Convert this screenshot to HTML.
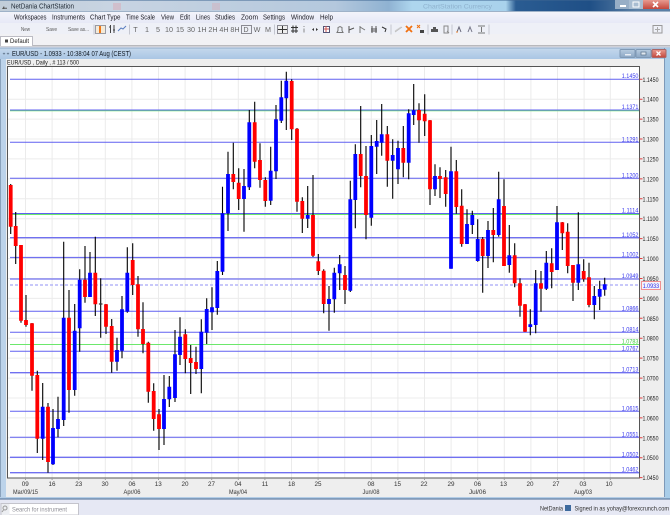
<!DOCTYPE html>
<html><head><meta charset="utf-8"><style>
html,body{margin:0;padding:0;width:670px;height:515px;overflow:hidden;background:#e6e8f4}
svg{display:block;font-family:"Liberation Sans",sans-serif;filter:blur(.3px)}
</style></head><body>
<svg width="670" height="515" viewBox="0 0 670 515" xmlns="http://www.w3.org/2000/svg">
<defs>
<linearGradient id="tb" x1="0" x2="1" y1="0" y2="0">
<stop offset="0" stop-color="#c2ced9"/><stop offset=".17" stop-color="#c8d4e2"/><stop offset=".5" stop-color="#b4c8dd"/><stop offset=".58" stop-color="#8fb2d2"/><stop offset=".615" stop-color="#aed6ee"/><stop offset=".755" stop-color="#a9d2ec"/><stop offset=".77" stop-color="#2a5c92"/><stop offset=".88" stop-color="#1f4f86"/><stop offset=".95" stop-color="#5a7fa5"/><stop offset="1" stop-color="#5a7fa5"/>
</linearGradient>
<linearGradient id="ct" x1="0" x2="0" y1="0" y2="1"><stop offset="0" stop-color="#c5d8ec"/><stop offset="1" stop-color="#aac6e4"/></linearGradient>
<linearGradient id="mn" x1="0" x2="0" y1="0" y2="1"><stop offset="0" stop-color="#f4f5fb"/><stop offset="1" stop-color="#e6e8f6"/></linearGradient>
<linearGradient id="cb" x1="0" x2="0" y1="0" y2="1"><stop offset="0" stop-color="#e89a90"/><stop offset="1" stop-color="#c4473c"/></linearGradient>
<linearGradient id="gb" x1="0" x2="0" y1="0" y2="1"><stop offset="0" stop-color="#b8cce0"/><stop offset="1" stop-color="#8aa6c4"/></linearGradient>
</defs>

<!-- window chrome -->
<rect width="670" height="515" fill="#e6e8f4"/>
<rect width="670" height="12" fill="url(#tb)"/>
<rect y="0" width="670" height="1" fill="#3d6692" opacity=".5"/>
<rect x="113" y="3" width="8" height="7" fill="#d9a9b5" opacity=".5"/>
<rect x="212" y="3" width="8" height="7" fill="#d9a9b5" opacity=".4"/>
<rect x="615" y="0" width="55" height="9" fill="#a9bdd1"/>
<rect x="615" y="0" width="14" height="9" fill="#97aec6"/>
<rect x="643" y="0" width="26" height="9" fill="url(#cb)"/>
<rect x="620" y="5" width="6" height="2" fill="#fff"/>
<rect x="633" y="2" width="6" height="5" fill="none" stroke="#fff" stroke-width="1"/>
<path d="M653 2l5 5M658 2l-5 5" stroke="#fff" stroke-width="1.6"/>
<path d="M2 9l2-3 1 3zM5 9l1-2 1 2z" fill="#555"/>
<text x="11" y="8.5" font-size="7.6" fill="#1e2833" textLength="63" lengthAdjust="spacingAndGlyphs">NetDania ChartStation</text>
<text x="423" y="8.5" font-size="6" fill="#8fb2ce" textLength="69" lengthAdjust="spacingAndGlyphs">ChartStation Currency</text>
<rect y="11" width="670" height="12" fill="url(#mn)"/>
<rect y="11" width="670" height="1" fill="#9fb2c8"/>
<rect y="23" width="670" height="12" fill="#eef0f7"/>
<rect y="34" width="670" height="12" fill="#f1f1f4"/>

<g font-size="7.2" fill="#1c1c24">
<text x="14" y="19.4" textLength="32.5" lengthAdjust="spacingAndGlyphs">Workspaces</text>
<text x="52" y="19.4" textLength="33" lengthAdjust="spacingAndGlyphs">Instruments</text>
<text x="90" y="19.4" textLength="30.5" lengthAdjust="spacingAndGlyphs">Chart Type</text>
<text x="126" y="19.4" textLength="29" lengthAdjust="spacingAndGlyphs">Time Scale</text>
<text x="161" y="19.4" textLength="13" lengthAdjust="spacingAndGlyphs">View</text>
<text x="180" y="19.4" textLength="10" lengthAdjust="spacingAndGlyphs">Edit</text>
<text x="196" y="19.4" textLength="14" lengthAdjust="spacingAndGlyphs">Lines</text>
<text x="215" y="19.4" textLength="20" lengthAdjust="spacingAndGlyphs">Studies</text>
<text x="241" y="19.4" textLength="17" lengthAdjust="spacingAndGlyphs">Zoom</text>
<text x="263" y="19.4" textLength="22" lengthAdjust="spacingAndGlyphs">Settings</text>
<text x="291" y="19.4" textLength="23" lengthAdjust="spacingAndGlyphs">Window</text>
<text x="320" y="19.4" textLength="13" lengthAdjust="spacingAndGlyphs">Help</text>
</g>

<!-- toolbar -->
<g font-size="5.6" fill="#555">
<text x="21" y="31" textLength="9" lengthAdjust="spacingAndGlyphs">New</text>
<text x="46" y="31" textLength="11" lengthAdjust="spacingAndGlyphs">Save</text>
<text x="68" y="31" textLength="21" lengthAdjust="spacingAndGlyphs">Save as...</text>
</g>
<rect x="95.5" y="25.5" width="10" height="8" fill="#f4ead8" stroke="#9a9aa2"/>
<path d="M100 26v7" stroke="#f07818" stroke-width="2"/>
<path d="M110.500 25v8M114 25v8M109 27h2M113 30h2" stroke="#444" fill="none"/>
<path d="M118 31l3-3 2 1 3-3" stroke="#5a7fc0" fill="none" stroke-width="1"/>
<path d="M94 24.500v10M129.500 24.500v10M274.500 24.500v10M391 24.500v10M428 24.500v10M452 24.500v10M489 24.500v10" stroke="#c4c6cf"/>
<g font-size="7.200" fill="#666" text-anchor="middle">
<text x="135.500" y="32">T</text><text x="147" y="32">1</text><text x="158" y="32">5</text><text x="169" y="32">10</text><text x="180" y="32">15</text><text x="191" y="32">30</text><text x="202" y="32">1H</text><text x="213" y="32">2H</text><text x="224" y="32">4H</text><text x="235" y="32">8H</text><text x="246" y="32">D</text><text x="257" y="32">W</text><text x="268" y="32">M</text>
</g>
<rect x="241.500" y="25.500" width="10" height="8" fill="none" stroke="#8a8a92"/>
<rect x="277.500" y="25.500" width="10" height="8" fill="#eee" stroke="#8a8a92"/>
<path d="M282.500 26v7M278 29.500h9" stroke="#333"/>
<path d="M291 27.500h7M291 31h7M293 25.500v7.500M296 25.500v7.500" stroke="#333" fill="none"/>
<path d="M304 26v1M304 28.500v4" stroke="#888"/>
<path d="M312 29.500l2-1.500v3zM318 29.500l-2-1.500v3z" fill="#333"/>
<rect x="323.500" y="26.500" width="6" height="6" fill="#fff" stroke="#557"/><path d="M324 29h5M326 26v6" stroke="#c55"/>
<g stroke="#777" fill="none">
<path d="M340 32.500h-3l1-2v-3l2-1 2 1v3l1 2z"/>
<path d="M349 26v7M349 30l5-2" stroke="#555"/>
<path d="M360 26v7M360 27l5 3" stroke="#777"/>
<path d="M372 26v7M376 26v7M371 29h6M371 31h6" stroke="#555"/>
<path d="M382 27l4 2-1 3" stroke="#333"/>
<path d="M395 32l7-5" stroke="#bbb"/>
<path d="M395 31l6-4" stroke="#ccc"/>
</g>
<path d="M406 26l6 6M412 26l-6 6" stroke="#f07010" stroke-width="1.800"/>
<path d="M417 25l3 3M420 25l-3 3" stroke="#f07010"/><rect x="420" y="30" width="4" height="3" fill="#444"/>
<path d="M431 32v-3h7v3zM433 29v-2h3v2z" fill="#555"/>
<path d="M444 26h4v7h-4zM447 31l2 2" fill="none" stroke="#888"/>
<g fill="none" stroke="#666">
<path d="M457 32l2-5 2 5" stroke="#667"/><circle cx="457" cy="32" r=".8" fill="#f08020" stroke="none"/>
<path d="M468 32l2-5 2 5" stroke="#778"/>
<path d="M478 26h7M478 33h7M481.500 27v5" stroke="#777"/>
<rect x="649" y="25.500" width="9" height="7.500" stroke="#999" transform="translate(4 0)"/>
<path d="M657.500 27v5M655 29.500h5" stroke="#aaa"/>
</g>

<!-- tab -->
<rect y="45" width="670" height="1.500" fill="#b8b8bc"/>
<rect y="46.500" width="670" height="1.500" fill="#e8eaf2"/>
<path d="M.5 46V36.500h32V46" fill="#fff" stroke="#bcbcc4"/>
<rect x="5" y="39.500" width="3" height="3" fill="#444"/>
<text x="10" y="43" font-size="6.500" fill="#222" textLength="19" lengthAdjust="spacingAndGlyphs">Default</text>

<!-- child window -->
<rect y="48" width="666" height="451" fill="#eeeeee"/>
<rect y="48" width="670" height="11" fill="url(#ct)"/>
<rect y="47.500" width="670" height="1" fill="#8fabc9"/>
<rect x="0" y="59" width="6" height="440" fill="#bcd3ea"/>
<rect x="0" y="59" width="1" height="440" fill="#8aa2bc"/>
<rect x="664" y="48" width="6" height="451" fill="#a9cde9"/>
<rect x="664" y="48" width="1" height="451" fill="#7e99b8"/>
<rect y="497" width="666" height="1.500" fill="#b4cde6"/>
<rect y="498.500" width="670" height="1" fill="#4a6a92"/>
<path d="M3 53l1 1 1-1M7 53l1 1 1-1" stroke="#6a7f96" fill="none"/>
<text x="12" y="56.200" font-size="7" fill="#111a24" textLength="119" lengthAdjust="spacingAndGlyphs">EUR/USD - 1.0933 - 10:38:04  07 Aug (CEST)</text>
<rect x="620" y="49.500" width="15" height="8" rx="1" fill="url(#gb)" stroke="#7f99b5"/>
<rect x="636" y="49.500" width="15" height="8" rx="1" fill="url(#gb)" stroke="#7f99b5"/>
<rect x="652" y="49.500" width="14" height="8" rx="1" fill="url(#cb)" stroke="#a66"/>
<rect x="625" y="54" width="6" height="1.500" fill="#e8eef5"/>
<path d="M641 52h5v3h-5z" fill="#dfe7ef" stroke="#5f7890" stroke-width=".8"/>
<path d="M656.500 51.500l4 4M660.500 51.500l-4 4" stroke="#fff" stroke-width="1.300"/>
<text x="7" y="64.300" font-size="6" fill="#222" textLength="72" lengthAdjust="spacingAndGlyphs">EUR/USD , Daily , # 113 / 500</text>

<!-- plot area -->
<rect x="7.500" y="66.500" width="632" height="411.500" fill="#fff"/>
<path stroke="#ececec" fill="none" d="M7.500 99.200H639M7.500 119.100H639M7.500 139H639M7.500 158.900H639M7.500 178.900H639M7.500 198.800H639M7.500 218.700H639M7.500 238.600H639M7.500 258.500H639M7.500 278.500H639M7.500 298.400H639M7.500 318.300H639M7.500 338.200H639M7.500 358.100H639M7.500 378.100H639M7.500 398H639M7.500 417.900H639M7.500 437.800H639M7.500 457.700H639"/>
<path stroke="#ebebeb" fill="none" d="M25.500 67V478M52.100 67V478M78.700 67V478M105.300 67V478M131.900 67V478M158.500 67V478M185.100 67V478M211.700 67V478M238.300 67V478M264.900 67V478M291.500 67V478M318.100 67V478M344.700 67V478M371.300 67V478M397.900 67V478M424.500 67V478M451.100 67V478M477.700 67V478M504.300 67V478M530.900 67V478M557.500 67V478M584.100 67V478M610.300 67V478"/>

<!-- green lines -->
<path stroke="#6ce86c" fill="none" d="M10 110.800H639M10 214.500H639M10 344.500H639"/>
<!-- blue lines -->
<path stroke="#6060f0" fill="none" d="M10 79.300H639M10 110H639M10 142.300H639M10 178.300H639M10 213.500H639M10 311.300H639M10 332.300H639M10 351.300H639M10 411.300H639M10 437.300H639"/>
<path stroke="#7070f0" fill="none" stroke-width="1.300" d="M10 237.700H639M10 257.500H639M10 279H639M10 372.700H639M10 457.300H639M10 472.700H639"/>
<path stroke="#a8a8f8" fill="none" stroke-width="1.300" stroke-dasharray="3 2" d="M10 285H639"/>

<!-- wicks -->
<path fill="none" stroke="#000" stroke-width="1.100" d="M10.700 184V234M15.700 212V264M21 245V322.700M26 295V326.700M32 323V390.700M37.300 370.700V453M42.700 383V460M48 403V472.700M53 409V465M58 396.700V437.300M63.700 241.700V426M69 290V412.700M74.700 304V395.700M79.700 269.300V351.700M85 246V302.700M90 252V297M95.300 236.700V316M100.700 278.300V337.700M106 304V334M111.700 319V372.700M117 337.700V370.700M122 296V358.300M127.300 247.300V312.700M132.700 243.300V295M138 276V336.700M143 302.300V353.300M148.300 341.700V402.700M153.700 383.300V430.700M159 409V450M164 375V445M169.300 376V407M175 330V402M180 317.300V365M185.300 329.300V373.300M190.700 345V394M196 346.700V374M201.300 319.300V393.300M206.700 298.300V344M212 287.300V330M217.300 261V314.700M222.500 186.700V275M228 151.700V231M233.300 142.700V189.300M238.700 168.300V210M244 169V231.700M249.300 110V190M254.700 101.700V168.300M260 143.300V187.700M265.300 177.300V206.700M270.700 146.700V205M276 105V179M281.300 80.700V123M286.300 71.700V130M291.700 79.300V140M297 128V211.700M302.300 197.300V233M307.700 186V228M313 175V257M318.300 254V275M323.700 269.300V313.300M329 286V330.700M334.300 267.700V312.700M339.700 255V290M345 266V304M350.300 180.700V292M355.300 144.300V228.300M360.700 106V187.300M366 146V239.300M371.300 135V225.700M376.700 120V174M381.700 104V155.700M387.300 126V186.700M392.700 139.300V198.700M398 140.700V184M403.300 126V177.300M408.700 109.300V179.300M413.700 84V125M419 103.300V142.700M424.700 94.300V136M430 120V205M435 164.300V196M440 167.300V198M445.700 170V206.700M451 146.700V268.700M456.300 160V213.700M461.700 189.300V246.700M467 209.300V244M472.300 210.700V234M477.700 219.300V261.700M482.700 237V292.700M488 221V268M493.300 208V262.300M498.700 171.700V236.700M504 179.300V266M509.300 225V272.700M514.700 243.300V287.300M520 278.300V316.700M525 304V332M530.300 309.300V335.300M535.700 270V333.300M541 271V311.700M546.300 251V290M551.700 248.300V288.300M557 206V270M562.300 222V250M567.700 223.300V273.300M573 265V301M578.300 212.300V290M583.700 259.300V281.700M589 262.700V307.300M594.300 286V319.300M599.700 280.700V310M604.700 277.700V295.700"/>
<!-- doji -->
<path d="M98.900 304H102.500" stroke="#333" stroke-width="1.200"/>
<!-- red bodies -->
<path fill="none" stroke="#ff0000" stroke-width="3.800" d="M10.700 185V226.700M15.700 226V246M21 245V320.700M26 320V325M32 323.300V375.700M37.300 375V438.700M48 406.700V462M69 317.700V390M85 279.700V297M95.300 272.700V304.300M106 304.300V326.700M111.700 326V361.700M132.700 260V285M138 284.300V329.300M143 329V344M148.300 342.700V391.700M153.700 391V419M159 414.300V429M185.300 334.300V359M190.700 358V363M196 362V369M233.300 174V182M238.700 182.700V199M254.700 122.300V161.700M260 160V180M265.300 180V201M291.700 81V129.300M297 128.700V201.700M302.300 201V218.700M313 215V255.700M318.300 261.300V271M323.700 270.700V304M345 275V290M360.700 154V176M366 176V215M387.300 134.300V160.700M403.300 148V162.700M419 110V120.300M424.700 113.700V121.300M430 120.300V189.300M440 176V179M445.700 177.300V194M456.300 171.300V207M461.700 205.700V244M482.700 239V256M493.300 230V235M504 206V266M514.700 255.300V283.300M520 283.300V305.700M525 304.300V331.700M541 283.300V288.700M551.700 263.300V272M562.300 222.300V233.300M567.700 231.700V266M573 265V282.700M583.700 271V279.300M589 277.300V305"/>
<!-- blue bodies -->
<path fill="none" stroke="#0000ff" stroke-width="3.800" d="M42.700 406.700V438.700M53 428V464.300M58 419V429M63.700 317.700V420M74.700 330.700V390M79.700 279.700V328.300M90 272.700V297M117 350V361.700M122 309.300V350.700M127.300 272.700V311.700M164 399V429M169.300 386.700V399.300M175 354.300V398M180 336.700V355M201.300 331.700V369M206.700 309V332.700M212 307.300V312.300M217.300 271V308M222.500 213.300V271.700M228 174V213.300M244 186V199M249.300 122.300V187.300M270.700 170.700V200.700M276 119.300V171.300M281.300 97.300V120.700M286.300 80.700V98.300M307.700 215V218.700M329 299V304M334.300 272.700V299.300M339.700 264.300V273.300M350.300 199.300V290.700M355.300 154V200M371.300 146V217.700M376.700 141V146.700M381.700 134.300V142.700M392.700 155V160.700M398 148V169.300M408.700 113.300V162.700M413.700 110.300V115M435 176V189.300M451 171.300V268.700M467 224V244M472.300 215V225M477.700 239V261M488 230V256M498.700 199.300V235M509.300 255.300V265M530.300 324.300V327M535.700 283.300V325M546.300 262.700V288.700M557 222.300V270M578.300 264.300V282.700M594.300 296V305M599.700 289V296.700M604.700 284.300V289.700"/>

<!-- frame -->
<path d="M7.500 66.500H639.500V478H7.500Z" fill="none" stroke="#555"/>

<!-- line labels -->
<g font-size="6.500" fill="#3a3aee">
<text x="621.700" y="78.200" textLength="16.800" lengthAdjust="spacingAndGlyphs">1.1450</text>
<text x="621.700" y="109" textLength="16.800" lengthAdjust="spacingAndGlyphs">1.1371</text>
<text x="621.700" y="141.300" textLength="16.800" lengthAdjust="spacingAndGlyphs">1.1291</text>
<text x="621.700" y="177.300" textLength="16.800" lengthAdjust="spacingAndGlyphs">1.1200</text>
<text x="621.700" y="212.500" textLength="16.800" lengthAdjust="spacingAndGlyphs">1.1114</text>
<text x="621.700" y="236.800" textLength="16.800" lengthAdjust="spacingAndGlyphs">1.1052</text>
<text x="621.700" y="256.500" textLength="16.800" lengthAdjust="spacingAndGlyphs">1.1002</text>
<text x="621.700" y="278" textLength="16.800" lengthAdjust="spacingAndGlyphs">1.0949</text>
<text x="621.700" y="310.300" textLength="16.800" lengthAdjust="spacingAndGlyphs">1.0866</text>
<text x="621.700" y="331.300" textLength="16.800" lengthAdjust="spacingAndGlyphs">1.0814</text>
<text x="621.700" y="343.500" textLength="16.800" lengthAdjust="spacingAndGlyphs" fill="#44cc44">1.0783</text>
<text x="621.700" y="350.500" textLength="16.800" lengthAdjust="spacingAndGlyphs">1.0767</text>
<text x="621.700" y="371.700" textLength="16.800" lengthAdjust="spacingAndGlyphs">1.0713</text>
<text x="621.700" y="410.300" textLength="16.800" lengthAdjust="spacingAndGlyphs">1.0615</text>
<text x="621.700" y="436.300" textLength="16.800" lengthAdjust="spacingAndGlyphs">1.0551</text>
<text x="621.700" y="456.300" textLength="16.800" lengthAdjust="spacingAndGlyphs">1.0502</text>
<text x="621.700" y="471.700" textLength="16.800" lengthAdjust="spacingAndGlyphs">1.0462</text>
</g>

<!-- right axis -->
<path stroke="#e04040" fill="none" d="M639.500 79.300h3M639.500 99.200h3M639.500 119.100h3M639.500 139h3M639.500 158.900h3M639.500 178.900h3M639.500 198.800h3M639.500 218.700h3M639.500 238.600h3M639.500 258.500h3M639.500 278.500h3M639.500 298.400h3M639.500 318.300h3M639.500 338.200h3M639.500 358.100h3M639.500 378.100h3M639.500 398h3M639.500 417.900h3M639.500 437.800h3M639.500 457.700h3M639.500 477.600h3"/>
<g font-size="6.500" fill="#222">
<text x="642.500" y="81.800" textLength="16" lengthAdjust="spacingAndGlyphs">1.1450</text>
<text x="642.500" y="101.700" textLength="16" lengthAdjust="spacingAndGlyphs">1.1400</text>
<text x="642.500" y="121.600" textLength="16" lengthAdjust="spacingAndGlyphs">1.1350</text>
<text x="642.500" y="141.500" textLength="16" lengthAdjust="spacingAndGlyphs">1.1300</text>
<text x="642.500" y="161.400" textLength="16" lengthAdjust="spacingAndGlyphs">1.1250</text>
<text x="642.500" y="181.400" textLength="16" lengthAdjust="spacingAndGlyphs">1.1200</text>
<text x="642.500" y="201.300" textLength="16" lengthAdjust="spacingAndGlyphs">1.1150</text>
<text x="642.500" y="221.200" textLength="16" lengthAdjust="spacingAndGlyphs">1.1100</text>
<text x="642.500" y="241.100" textLength="16" lengthAdjust="spacingAndGlyphs">1.1050</text>
<text x="642.500" y="261" textLength="16" lengthAdjust="spacingAndGlyphs">1.1000</text>
<text x="642.500" y="281" textLength="16" lengthAdjust="spacingAndGlyphs">1.0950</text>
<text x="642.500" y="300.900" textLength="16" lengthAdjust="spacingAndGlyphs">1.0900</text>
<text x="642.500" y="320.800" textLength="16" lengthAdjust="spacingAndGlyphs">1.0850</text>
<text x="642.500" y="340.700" textLength="16" lengthAdjust="spacingAndGlyphs">1.0800</text>
<text x="642.500" y="360.600" textLength="16" lengthAdjust="spacingAndGlyphs">1.0750</text>
<text x="642.500" y="380.600" textLength="16" lengthAdjust="spacingAndGlyphs">1.0700</text>
<text x="642.500" y="400.500" textLength="16" lengthAdjust="spacingAndGlyphs">1.0650</text>
<text x="642.500" y="420.400" textLength="16" lengthAdjust="spacingAndGlyphs">1.0600</text>
<text x="642.500" y="440.300" textLength="16" lengthAdjust="spacingAndGlyphs">1.0550</text>
<text x="642.500" y="460.200" textLength="16" lengthAdjust="spacingAndGlyphs">1.0500</text>
<text x="642.500" y="480.100" textLength="16" lengthAdjust="spacingAndGlyphs">1.0450</text>
</g>
<rect x="641.500" y="281.500" width="19" height="8" fill="#f4f4fa" stroke="#f09090"/>
<text x="642.700" y="287.900" font-size="6.500" fill="#2a2aee" textLength="16.500" lengthAdjust="spacingAndGlyphs">1.0933</text>

<!-- bottom axis -->
<path stroke="#999" fill="none" d="M25.500 478v2M52.100 478v2M78.700 478v2M105.300 478v2M131.900 478v2M158.500 478v2M185.100 478v2M211.700 478v2M238.300 478v2M264.900 478v2M291.500 478v2M318.100 478v2M371.300 478v2M397.900 478v2M424.500 478v2M451.100 478v2M477.700 478v2M504.300 478v2M530.900 478v2M557.500 478v2M584.100 478v2M610.300 478v2"/>
<g font-size="6.300" fill="#333" text-anchor="middle">
<text x="25.300" y="486.200">09</text><text x="52" y="486.200">16</text><text x="78.700" y="486.200">23</text><text x="105" y="486.200">30</text><text x="132" y="486.200">06</text><text x="158.300" y="486.200">13</text><text x="185" y="486.200">20</text><text x="211.500" y="486.200">27</text><text x="238" y="486.200">04</text><text x="265" y="486.200">11</text><text x="291.500" y="486.200">18</text><text x="318" y="486.200">25</text><text x="371" y="486.200">08</text><text x="397.500" y="486.200">15</text><text x="424" y="486.200">22</text><text x="451" y="486.200">29</text><text x="477.500" y="486.200">06</text><text x="503.500" y="486.200">13</text><text x="530" y="486.200">20</text><text x="556" y="486.200">27</text><text x="583" y="486.200">03</text><text x="609" y="486.200">10</text>
<text x="25.500" y="494" textLength="25" lengthAdjust="spacingAndGlyphs">Mar/09/15</text>
<text x="132" y="494" textLength="17" lengthAdjust="spacingAndGlyphs">Apr/06</text>
<text x="238" y="494" textLength="18" lengthAdjust="spacingAndGlyphs">May/04</text>
<text x="371" y="494" textLength="17" lengthAdjust="spacingAndGlyphs">Jun/08</text>
<text x="477.500" y="494" textLength="17" lengthAdjust="spacingAndGlyphs">Jul/06</text>
<text x="583" y="494" textLength="18" lengthAdjust="spacingAndGlyphs">Aug/03</text>
</g>

<!-- status bar -->
<rect y="499.500" width="670" height="15.500" fill="#e6e8f4"/>
<rect x="1" y="503.500" width="77.500" height="11.500" fill="#fff" stroke="#c4c4cc"/>
<rect x="1.500" y="504" width="8" height="11" fill="#eceef2"/>
<circle cx="5" cy="508" r="2" fill="none" stroke="#999"/><path d="M3.500 510l-1.500 2" stroke="#999"/>
<text x="12" y="511.500" font-size="6.500" fill="#8e8e96" textLength="55" lengthAdjust="spacingAndGlyphs">Search for instrument</text>
<text x="540" y="510.500" font-size="6.200" fill="#333" textLength="23" lengthAdjust="spacingAndGlyphs">NetDania</text>
<rect x="565" y="505" width="6" height="6" fill="#3e6a9e"/>
<text x="574.500" y="510.500" font-size="6.200" fill="#333" textLength="94.500" lengthAdjust="spacingAndGlyphs">Signed in as yohay@forexcrunch.com</text>
</svg>
</body></html>
